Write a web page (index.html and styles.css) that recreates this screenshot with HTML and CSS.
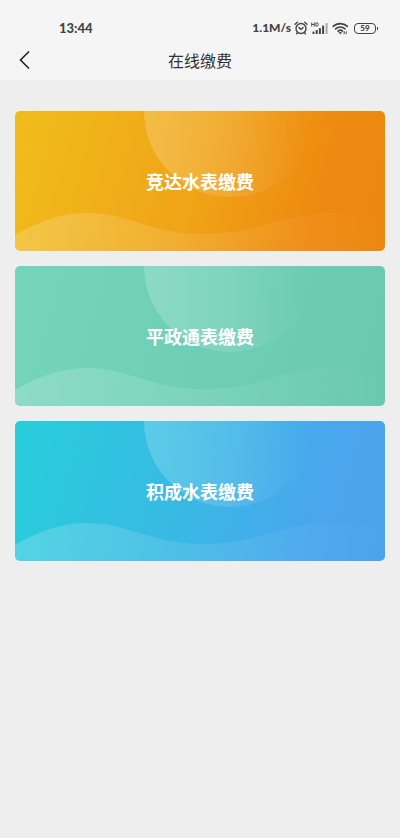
FILE: index.html
```html
<!DOCTYPE html>
<html lang="zh-CN">
<head>
<meta charset="utf-8">
<meta name="viewport" content="width=device-width, initial-scale=1">
<title>在线缴费</title>
<link rel="stylesheet" href="styles.css">
</head>
<body>
<svg class="defs" width="0" height="0" aria-hidden="true">
  <defs>
    <linearGradient id="bubble" x1="0" y1="0.4" x2="1" y2="0.4">
      <stop offset="0" stop-color="#fff" stop-opacity="0.2"/>
      <stop offset="0.5" stop-color="#fff" stop-opacity="0.12"/>
      <stop offset="0.95" stop-color="#fff" stop-opacity="0"/>
    </linearGradient>
    <linearGradient id="wave" x1="0" y1="0" x2="1" y2="0">
      <stop offset="0" stop-color="#fff" stop-opacity="0.19"/>
      <stop offset="1" stop-color="#fff" stop-opacity="0"/>
    </linearGradient>
    <symbol id="waves" viewBox="0 0 370 140" preserveAspectRatio="none">
      <circle cx="215" cy="0" r="86" fill="url(#bubble)"/>
      <path d="M0 124C26 109 47 102 73 102C113 102 137 123 185 123C248 123 262 102 320 102C340 102 356 106 370 112V140H0Z" fill="url(#wave)"/>
    </symbol>
  </defs>
</svg>
<header class="top">
  <div class="status">
    <span class="time">13:44</span>
    <div class="indicators">
      <span class="speed">1.1M/s</span>
      <svg class="alarm" width="14" height="14" viewBox="0 0 14 14" fill="none" stroke="#444" stroke-width="1.4" stroke-linecap="round" stroke-linejoin="round" aria-hidden="true">
        <circle cx="7" cy="7.5" r="5"/>
        <path d="M1 3.2L3.3 1.2M13 3.2L10.7 1.2M4.9 6.5L7 8.4L9.1 6.5M3.4 11.7L2.6 12.7M10.6 11.7L11.4 12.7"/>
      </svg>
      <svg class="signal" width="18" height="14" viewBox="0 0 18 14" fill="#444" aria-hidden="true">
        <path d="M0.7 1.5V5.5M3.3 1.5V5.5M0.7 3.5H3.3M4.9 1.9V5.1H5.8Q7.4 5.1 7.4 3.5T5.8 1.9Z" fill="none" stroke="#444" stroke-width="0.9"/>
        <rect x="1.5" y="10.5" width="2" height="2.5" rx="0.6"/>
        <rect x="4.7" y="9" width="2" height="4" rx="0.6"/>
        <rect x="7.9" y="7" width="2" height="6" rx="0.6"/>
        <rect x="11.1" y="4.5" width="2" height="8.5" rx="0.6"/>
        <rect x="14.6" y="2" width="2" height="11" rx="0.6" fill="#aaa"/>
      </svg>
      <svg class="wifi" width="17" height="14" viewBox="0 0 17 14" fill="none" stroke="#444" stroke-width="1.6" stroke-linecap="round" aria-hidden="true">
        <path d="M1.2 5.4C5 1.7 11.6 1.7 15.4 5.4M3.6 7.9C6.2 5.4 10.4 5.4 13 7.9M6 10.2C7.4 9 9.3 9 10.6 10.2"/>
        <path d="M7.1 11.7L8.3 12.8L9.5 11.7Z" fill="#444" stroke-width="0.8"/>
        <path d="M12 12.8L12.4 10.8M14 12.8L14.4 10.8" stroke-width="1"/>
      </svg>
      <span class="battery">59</span>
    </div>
  </div>
  <nav class="bar">
    <button class="back" type="button" aria-label="返回">
      <svg width="12" height="20" viewBox="0 0 12 20" fill="none" stroke="#222" stroke-width="1.6" aria-hidden="true"><path d="M10 1.5L1.5 10L10 18.5"/></svg>
    </button>
    <h1 class="title">在线缴费</h1>
  </nav>
</header>
<main class="cards">
  <button class="card orange" type="button"><svg class="art" aria-hidden="true"><use href="#waves"/></svg><span class="label">竞达水表缴费</span></button>
  <button class="card green" type="button"><svg class="art" aria-hidden="true"><use href="#waves"/></svg><span class="label">平政通表缴费</span></button>
  <button class="card blue" type="button"><svg class="art" aria-hidden="true"><use href="#waves"/></svg><span class="label">积成水表缴费</span></button>
</main>
</body>
</html>
```
FILE: styles.css
```css
* {
  box-sizing: border-box;
}

body {
  margin: 0;
  min-height: 100vh;
  background: #eeeeee;
  color: #333;
  font-family: "Noto Sans", "Noto Sans CJK SC", sans-serif;
}

.defs {
  position: absolute;
}

.top {
  background: #f5f5f5;
}

.status {
  display: flex;
  align-items: center;
  justify-content: space-between;
  height: 40px;
  padding: 16px 22px 0 59px;
  color: #444;
  font-family: Lato, "Noto Sans", sans-serif;
  font-size: 13px;
  font-weight: 900;
  line-height: 24px;
}

.indicators {
  display: flex;
  align-items: center;
  gap: 3px;
}

.speed {
  font-size: 12px;
}

.battery {
  position: relative;
  width: 22px;
  height: 11px;
  margin: 0 2px;
  border: 1px solid #444;
  border-radius: 4px;
  font-size: 8px;
  line-height: 9px;
  text-align: center;
}

.battery::after {
  content: "";
  position: absolute;
  top: 3px;
  right: -3px;
  width: 1px;
  height: 3px;
  background: #444;
}

.bar {
  display: grid;
  grid-template-columns: 48px 1fr 48px;
  align-items: center;
  height: 40px;
}

.back {
  display: flex;
  align-items: center;
  height: 40px;
  padding: 0 0 0 19px;
  border: 0;
  background: none;
}

.title {
  margin: 0;
  font-family: "Noto Sans CJK SC", sans-serif;
  font-size: 16px;
  font-weight: 400;
  line-height: 24px;
  text-align: center;
}

.cards {
  display: grid;
  gap: 15px;
  padding: 31px 15px;
}

.card {
  display: grid;
  place-items: center;
  min-height: 140px;
  padding: 0;
  border: 0;
  border-radius: 5px;
  overflow: hidden;
  color: #fff;
  font-family: "Noto Sans CJK SC", sans-serif;
  font-size: 18px;
  font-weight: 700;
  line-height: 28px;
}

.art,
.label {
  grid-area: 1 / 1;
}

.art {
  width: 100%;
  height: 140px;
}

.label {
  z-index: 1;
}

.orange {
  background: linear-gradient(105deg, #f0bd1b, #f0a317 50%, #ee8a10 80%, #ec8811);
}

.green {
  background: linear-gradient(105deg, #74d4bc, #6ecfb6 50%, #6ac8b1);
}

.blue {
  background: linear-gradient(105deg, #27cedb, #3ab7e5 50%, #4aa6ee 80%, #4ba4ec);
}
```
